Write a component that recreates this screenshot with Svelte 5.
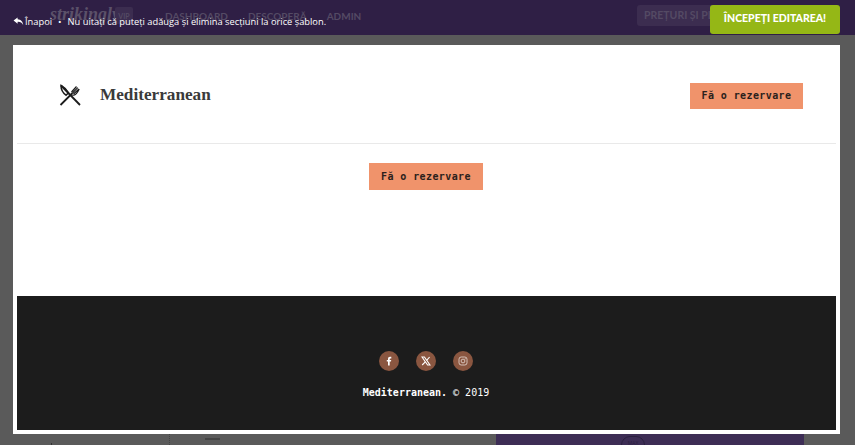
<script>
  const socials = ['f', 'x', 'ig'];
</script>

<div class="page">
  <header class="appbar">
    <span class="logo">strikingly</span>
    <span class="vip">VIP</span>
    <nav class="nav">
      <span>DASHBOARD</span>
      <span>DESCOPERĂ</span>
      <span>ADMIN</span>
    </nav>
    <span class="plans">PREȚURI ȘI PLANURI</span>
  </header>

  <main class="behind">
    <div class="side"><span class="tick"></span></div>
    <div class="mid"><span class="dash"></span></div>
    <div class="panel"><span class="pill">MAX</span></div>
  </main>

  <div class="topbar">
    <div class="hint">
      <svg class="back" viewBox="0 0 12 10" width="11" height="9" aria-hidden="true">
        <path d="M5 0.5 L0.5 4 L5 7.5 V5.4 C7.8 5.2 9.8 6.2 11.2 9 C11 5.4 8.6 2.8 5 2.6 Z" fill="#fff" />
      </svg>
      <span>Înapoi</span>
      <span class="dot">•</span>
      <span>Nu uitați că puteți adăuga și elimina secțiuni la orice șablon.</span>
    </div>
    <button class="start">ÎNCEPEȚI EDITAREA!</button>
  </div>

  <section class="modal">
    <div class="site">
      <div class="sitehead">
        <div class="brand">
          <svg class="mark" viewBox="0 0 24 24" width="24" height="24" aria-hidden="true">
            <path d="M3 2.5 L22 22" stroke="#1c1c1c" stroke-width="1.8" fill="none" />
            <path d="M3 2.5 C6.5 4.5 9 7 10.5 9.8 L8 12.2 C5 10 3 6.5 3 2.5 Z" fill="none" stroke="#1c1c1c" stroke-width="1.5" />
            <path d="M2.5 22 L14.5 10" stroke="#1c1c1c" stroke-width="1.8" fill="none" />
            <path d="M13.5 9 L18.5 3.5 M15.5 11 L21 6 M14.5 10 L19.8 4.6 M14 12 C16.5 13 18.5 12 21.2 6" stroke="#1c1c1c" stroke-width="1.2" fill="none" />
          </svg>
          <span class="name">Mediterranean</span>
        </div>
        <a class="cta" href="#top">Fă o rezervare</a>
      </div>
      <div class="sitebody">
        <a class="cta wide" href="#top">Fă o rezervare</a>
      </div>
      <footer class="foot">
        <div class="socials">
          {#each socials as s}
            <span class="soc">
              {#if s === 'f'}
                <svg viewBox="0 0 10 10" width="10" height="10" aria-hidden="true"><path d="M4 9.5 V5.6 H2.8 V4 H4 V3 C4 1.6 4.8 0.8 6 0.8 H7.3 V2.4 H6.5 C5.9 2.4 5.7 2.6 5.7 3.1 V4 H7.2 L7 5.6 H5.7 V9.5 Z" fill="#fff" /></svg>
              {:else if s === 'x'}
                <svg viewBox="0 0 10 10" width="10" height="10" aria-hidden="true"><path d="M1 1 H3.4 L9 9 H6.6 Z" fill="none" stroke="#fff" stroke-width="1.1" /><path d="M8.6 1 L5.6 4.4 M4.3 5.8 L1.2 9" stroke="#fff" stroke-width="1.1" /></svg>
              {:else}
                <svg viewBox="0 0 10 10" width="10" height="10" aria-hidden="true"><rect x="1" y="1" width="8" height="8" rx="2.2" fill="none" stroke="#e8dcd6" stroke-width="0.8" /><circle cx="5" cy="5" r="1.9" fill="none" stroke="#e8dcd6" stroke-width="0.8" /><circle cx="7.2" cy="2.8" r="0.5" fill="#e8dcd6" /></svg>
              {/if}
            </span>
          {/each}
        </div>
        <p class="copy"><b>Mediterranean.</b> © 2019</p>
      </footer>
    </div>
  </section>
</div>

<style>
  :global(body) {
    margin: 0;
    background: #5a5a5a;
  }
  .page {
    position: relative;
    width: 855px;
    height: 445px;
    overflow: hidden;
    background: #5a5a5a;
    font-family: "Open Sans", sans-serif;
  }
  .appbar {
    display: flex;
    align-items: center;
    height: 35px;
    padding: 0 0 4px 50px;
    box-sizing: border-box;
    background: #2f1f45;
    color: #544a64;
    font-family: Lato, sans-serif;
    font-weight: 700;
  }
  .logo {
    font-family: "Liberation Serif", serif;
    font-style: italic;
    font-size: 18px;
    font-weight: 700;
    width: 65px;
    margin-top: -3px;
    color: #5b5169;
  }
  .vip {
    display: flex;
    align-items: center;
    justify-content: center;
    width: 18px;
    height: 17px;
    background: #3c2d50;
    border-radius: 2px;
    font-size: 7px;
  }
  .nav {
    display: flex;
    gap: 20px;
    margin-left: 32px;
    font-size: 10px;
  }
  .plans {
    width: 110px;
    height: 21px;
    margin-left: auto;
    margin-right: 108px;
    padding-left: 7px;
    box-sizing: border-box;
    background: #3c2d50;
    border-radius: 3px;
    font-size: 10.5px;
    line-height: 21px;
    white-space: nowrap;
    overflow: hidden;
  }
  .behind {
    display: grid;
    grid-template-columns: 169px 327px 308px 51px;
    height: 20px;
    margin-top: 390px;
  }
  .side {
    position: relative;
  }
  .tick {
    position: absolute;
    left: 51px;
    bottom: 0;
    width: 1px;
    height: 2px;
    background: #333;
  }
  .mid {
    position: relative;
    border-left: 1px dotted #444;
  }
  .dash {
    position: absolute;
    left: 35px;
    bottom: 5px;
    width: 15px;
    height: 2px;
    background: #444;
  }
  .panel {
    position: relative;
    background: #3d2d55;
  }
  .pill {
    position: absolute;
    left: 125px;
    bottom: -9px;
    width: 24px;
    height: 18px;
    box-sizing: border-box;
    border: 1px solid #2b2040;
    border-radius: 10px;
    font-size: 5px;
    text-align: center;
    line-height: 12px;
    color: #2b2040;
  }
  .topbar {
    position: absolute;
    top: 5px;
    left: 13px;
    right: 15px;
    height: 29px;
    display: flex;
    align-items: center;
    justify-content: space-between;
  }
  .hint {
    display: flex;
    align-items: center;
    gap: 1px;
    margin-top: 3px;
    color: #fff;
    font-size: 9.3px;
    white-space: nowrap;
  }
  .dot {
    margin: 0 5px;
  }
  .start {
    width: 130px;
    height: 29px;
    padding: 0 0 3px;
    border: 0;
    border-radius: 3px;
    background: #95b716;
    color: #fff;
    font-family: Lato, sans-serif;
    font-weight: 900;
    font-size: 10.5px;
  }
  .modal {
    position: absolute;
    left: 13px;
    top: 45px;
    width: 827px;
    height: 389px;
    box-sizing: border-box;
    padding: 0 4px 4px;
    background: #fff;
  }
  .site {
    display: flex;
    flex-direction: column;
    height: 100%;
  }
  .sitehead {
    display: flex;
    align-items: center;
    justify-content: space-between;
    height: 99px;
    box-sizing: border-box;
    padding: 2px 33px 0 41px;
    border-bottom: 1px solid #e9e9e9;
  }
  .brand {
    display: flex;
    align-items: center;
    gap: 18px;
  }
  .name {
    font-family: "Liberation Serif", serif;
    font-weight: 700;
    font-size: 17.2px;
    color: #3a3a3a;
  }
  .cta {
    display: flex;
    align-items: center;
    justify-content: center;
    width: 113px;
    height: 26px;
    margin-top: 1px;
    background: #f0936b;
    color: #2a211c;
    font-family: "DejaVu Sans Mono", monospace;
    font-weight: 700;
    font-size: 10px;
    letter-spacing: 0.4px;
    text-decoration: none;
  }
  .sitebody {
    flex: 1;
    display: flex;
    justify-content: center;
    padding: 18px 1px 0 0;
  }
  .wide {
    width: 114px;
    height: 27px;
  }
  .foot {
    height: 134px;
    box-sizing: border-box;
    padding: 55px 1px 0 0;
    background: #1c1c1c;
    display: flex;
    flex-direction: column;
    align-items: center;
  }
  .socials {
    display: flex;
    gap: 17px;
  }
  .soc {
    display: flex;
    align-items: center;
    justify-content: center;
    width: 20px;
    height: 20px;
    border-radius: 50%;
    background: #8a5640;
  }
  .copy {
    margin: 15px 0 0;
    color: #fff;
    font-family: "DejaVu Sans Mono", monospace;
    font-size: 10px;
    line-height: 14px;
  }
</style>
